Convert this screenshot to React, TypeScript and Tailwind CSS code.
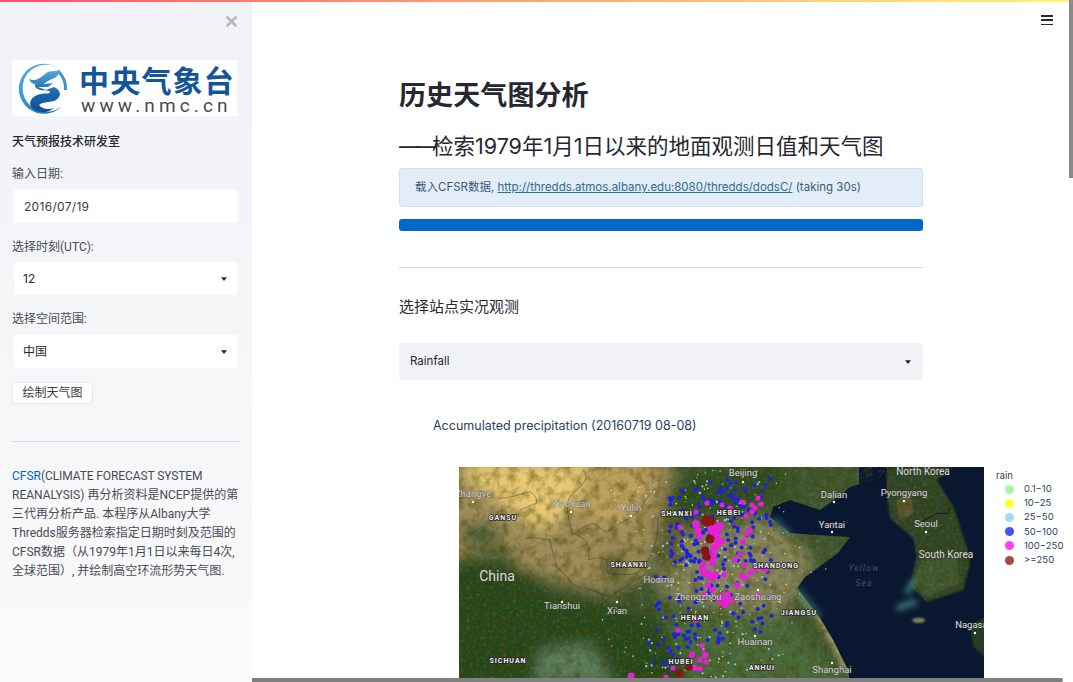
import React from "react";

const FONT = "font-['Inter','Noto_Sans_CJK_SC',sans-serif]";

function rng(seed: number) {
  let s = seed;
  return () => {
    s = (s * 16807) % 2147483647;
    return (s - 1) / 2147483646;
  };
}

type Dot = [number, number, number, string];

function makeDots(): Dot[] {
  const r = rng(9127);
  const out: Dot[] = [];
  const add = (n: number, x0: number, x1: number, y0: number, y1: number, rad: number, col: string, flat = false) => {
    for (let i = 0; i < n; i++) {
      const u = flat ? r() : (r() + r()) / 2;
      const v = r();
      out.push([x0 + u * (x1 - x0), y0 + v * (y1 - y0), rad, col]);
    }
  };
  add(130, 590, 840, 470, 682, 0.7, "#9fe09a");
  add(80, 600, 810, 480, 682, 0.8, "#f0ea3c");
  add(95, 630, 790, 480, 682, 1.1, "#8fcbe6");
  add(135, 668, 772, 478, 565, 2, "#1c22e0", true);
  add(85, 655, 772, 555, 640, 2, "#1c22e0", true);
  add(22, 640, 720, 630, 682, 2, "#1c22e0", true);
  const band: [number, number, number][] = [
    [696, 524, 4], [698, 531, 3.5], [700, 537, 3], [713, 529, 5.5], [715, 532, 6], [720, 526, 4], [716, 540, 3.5],
    [714, 548, 4], [713, 556, 4], [712, 563, 3.5], [718, 545, 3], [722, 541, 3], [703, 565, 3.5], [704, 572, 4],
    [708, 574, 4], [712, 578, 3.5], [715, 575, 3.5], [708, 585, 3], [712, 590, 3], [705, 595, 3], [724, 575, 3],
    [737, 585, 3], [742, 576, 3], [745, 578, 3], [728, 594, 3], [726, 600, 2.8], [722, 596, 3], [731, 600, 3],
    [725, 604, 4], [720, 601, 3], [746, 534, 2.8], [750, 530, 2.8], [743, 542, 2.8], [740, 554, 2.8], [752, 505, 2.6],
    [758, 498, 2.6], [761, 504, 2.6], [755, 508, 2.6], [752, 512, 2.6], [742, 502, 2.6], [746, 516, 2.6], [735, 512, 2.6],
    [730, 508, 2.6], [722, 505, 2.6], [707, 503, 2.6], [696, 512, 2.6], [680, 527, 2.6], [678, 630, 2.6],
    [696, 620, 2.8], [702, 646, 2.8], [705, 655, 3.2], [692, 655, 3.2], [700, 660, 2.8], [706, 662, 2.8],
    [695, 668, 2.8], [700, 669, 2.8], [673, 668, 2.6], [631, 676, 3.5], [666, 677, 2.6], [750, 573, 2.8],
    [755, 570, 2.6], [762, 568, 2.8], [758, 596, 2.8], [766, 570, 2.6], [735, 560, 2.8], [745, 565, 2.8],
  ];
  band.forEach(([x, y, rad]) => out.push([x, y, rad, "#e81fd8"]));
  ([
    [707, 521, 5.5], [711, 521, 4.5], [710, 539, 4.5], [705, 551, 4.5], [707, 557, 3.8], [679, 673, 3.8], [689, 667, 3.8],
  ] as [number, number, number][]).forEach(([x, y, rad]) => out.push([x, y, rad, "#8a1313"]));
  return out;
}

const DOTS = makeDots();

const City = ({ x, y, name, dy = -7, size = 9.5 }: { x: number; y: number; name: string; dy?: number; size?: number }) => (
  <g>
    <circle cx={x} cy={y} r={1.2} fill="#fff" />
    <text
      x={x}
      y={y + dy}
      textAnchor="middle"
      fontSize={size}
      fill="#d8d8d8"
      stroke="#3a3a3a"
      strokeWidth={0.5}
      paintOrder="stroke"
    >
      {name}
    </text>
  </g>
);

const Label2 = ({ x, y, name, size = 10 }: { x: number; y: number; name: string; size?: number }) => (
  <text x={x} y={y} textAnchor="middle" fontSize={size} fill="#dcdcdc" stroke="#333" strokeWidth="0.5" paintOrder="stroke">
    {name}
  </text>
);

const Prov = ({ x, y, name }: { x: number; y: number; name: string }) => (
  <text
    x={x}
    y={y}
    textAnchor="middle"
    fontSize={7}
    fontWeight={700}
    letterSpacing={1}
    fill="#efefef"
    stroke="#2a2a2a"
    strokeWidth={1.6}
    paintOrder="stroke"
  >
    {name}
  </text>
);

function MapImage() {
  return (
    <svg viewBox="459 467 525 215" className="w-[525px] h-[215px] block shrink-0" fontFamily="Roboto, sans-serif">
      <defs>
        <filter id="soft" x="-20%" y="-20%" width="140%" height="140%">
          <feGaussianBlur stdDeviation="20" />
        </filter>
        <filter id="soft2" x="-10%" y="-10%" width="120%" height="120%">
          <feGaussianBlur stdDeviation="3" />
        </filter>
        <filter id="soft3" x="-30%" y="-30%" width="160%" height="160%">
          <feGaussianBlur stdDeviation="9" />
        </filter>
        <filter id="grain">
          <feTurbulence type="fractalNoise" baseFrequency="0.11" numOctaves="5" seed="4" />
          <feColorMatrix values="0 0 0 0 0.05  0 0 0 0 0.05  0 0 0 0 0  2.2 0 0 0 -0.9" />
        </filter>
        <filter id="speck">
          <feTurbulence type="fractalNoise" baseFrequency="0.3" numOctaves="3" seed="11" />
          <feColorMatrix values="0 0 0 0 0.85  0 0 0 0 0.8  0 0 0 0 0.55  0 2.4 0 0 -1.2" />
        </filter>
        <clipPath id="landClip">
          <polygon points="459,467 888,467 880,478 850,487 830,503 820,510 790,500 773,507 770,517 790,533 817,535 850,537 838,553 805,577 797,588 820,618 833,640 848,670 850,682 459,682" />
        </clipPath>
        <clipPath id="grainClip">
          <polygon points="459,467 888,467 880,478 850,487 830,503 820,510 790,500 773,507 770,517 790,533 817,535 850,537 838,553 805,577 797,588 820,618 833,640 848,670 850,682 459,682" />
          <polygon points="887,467 953,467 937,480 953,507 967,547 970,563 963,590 927,602 910,585 917,557 913,538 890,518 887,493" />
        </clipPath>
      </defs>
      <rect x="459" y="467" width="525" height="215" fill="#0a1730" />
      <g clipPath="url(#landClip)">
        <rect x="459" y="467" width="400" height="215" fill="#3f5631" />
        <g transform="translate(450 460) scale(0.3333)" filter="url(#soft)">
          <polygon points="0,0 680,0 650,130 620,240 590,350 480,400 330,370 210,320 170,270 0,290" fill="#9e8a58" />
          <polygon points="40,0 420,0 390,110 290,215 210,170 130,110 60,70" fill="#e8c873" />
          <polygon points="420,0 610,0 590,120 500,200 390,170" fill="#bd9f5e" />
          <polygon points="0,300 200,320 330,410 500,440 640,480 720,680 0,680" fill="#25461f" />
          <polygon points="270,570 420,550 500,680 250,680" fill="#5a7a5c" />
          <polygon points="20,200 120,190 170,260 60,260" fill="#3e5a30" />
          <polygon points="640,100 770,30 1000,0 1000,110 760,160 680,170" fill="#2f4c24" />
          <polygon points="680,220 960,170 1100,300 1000,470 640,420 610,340" fill="#85835a" />
          <polygon points="640,470 1000,460 1200,680 720,680" fill="#4a6a3a" />
          <polygon points="620,170 690,170 700,320 630,340" fill="#5c5a32" />
          <polygon points="460,290 530,280 520,370 470,370" fill="#3f5a2c" />
        </g>
        <path d="M797 588 L820 618 L833 640 L848 670" stroke="#cdb57c" strokeWidth="6" fill="none" filter="url(#soft2)" />
      </g>
      <g transform="translate(740 460) scale(0.3333)">
        <g filter="url(#soft2)">
          <polygon points="440,20 640,20 590,60 640,140 680,260 690,310 670,390 560,425 510,375 530,290 520,235 450,175 440,100" fill="#2f4528" />
          <polygon points="470,120 510,105 520,160 480,180" fill="#5d5832" />
          <polygon points="540,300 650,290 660,370 560,410 520,370" fill="#3f5830" />
          <polygon points="690,500 735,470 735,590 700,560" fill="#243e22" />
          <ellipse cx="536" cy="481" rx="19" ry="8" fill="#7c8a58" />
        </g>
        <path d="M500 400 L525 360 M530 425 L470 445" stroke="#3f8582" strokeWidth="16" fill="none" filter="url(#soft3)" />
        <path d="M170 385 L240 470 M150 225 L100 175" stroke="#2e6f70" strokeWidth="14" fill="none" filter="url(#soft3)" />
      </g>
      <g clipPath="url(#grainClip)">
        <rect x="459" y="467" width="525" height="215" filter="url(#grain)" opacity="0.5" />
        <rect x="459" y="467" width="525" height="215" filter="url(#speck)" opacity="0.14" />
      </g>
      <g transform="translate(450 460) scale(0.3333)" fill="none" stroke="#2a2c20" strokeWidth="2" opacity="0.6">
        <path d="M400 30 C420 60 400 70 360 110 C345 130 355 190 370 225 C395 205 410 195 430 190 C450 200 460 215 470 215 C510 190 540 175 560 160 C580 130 590 115 615 85" />
        <path d="M380 225 C420 240 420 270 415 300 C440 290 460 295 470 300 C472 320 470 335 475 340 C510 345 540 345 560 340 C580 320 590 310 600 290 C612 260 618 245 620 230 C625 200 622 190 625 170" />
        <path d="M145 115 C180 115 215 100 240 95 C255 105 262 115 260 130 C240 135 225 145 210 150" />
        <path d="M320 320 C350 345 365 375 380 380 C420 385 450 400 480 410 C520 385 560 360 590 340" />
        <path d="M230 235 C260 230 285 240 300 240 C305 270 315 300 320 320" />
      </g>
      <g transform="translate(740 460) scale(0.3333)" fill="none" stroke="#111" strokeWidth="2.5">
        <path d="M415 68 L440 30 L455 22" />
        <path d="M545 185 L590 160 L625 160 L628 145" />
      </g>
      <text x="864" y="571" fontSize="8.5" letterSpacing="1.2" fontStyle="italic" fill="#42507a" textAnchor="middle">
        Yellow
      </text>
      <text x="864" y="586" fontSize="8.5" letterSpacing="1.2" fontStyle="italic" fill="#42507a" textAnchor="middle">
        Sea
      </text>
      <g>
        {DOTS.map(([x, y, r, c], i) => (
          <circle key={i} cx={x} cy={y} r={r} fill={c} />
        ))}
      </g>
      <City x={473} y={502} name="Zhangye" dy={-5} />
      <City x={571} y={512} name="Yinchuan" dy={-5} />
      <City x={631} y={516} name="Yulin" dy={-5} />
      <City x={562} y={602} name="Tianshui" dy={7} />
      <City x={617} y={602} name="Xi'an" dy={12} />
      <Label2 x={659} y={583} name="Houma" size={9.5} />
      <Label2 x={698} y={600} name="Zhengzhou" size={9.5} />
      <City x={743} y={482} name="Beijing" dy={-6} />
      <City x={834} y={502} name="Dalian" dy={-4} />
      <City x={832} y={532} name="Yantai" dy={-4} />
      <City x={904} y={501} name="Pyongyang" dy={-5} />
      <City x={926} y={532} name="Seoul" dy={-5} />
      <City x={758} y={590} name="Zaoshuang" dy={10} />
      <City x={755} y={636} name="Huainan" dy={9} />
      <City x={832} y={663} name="Shanghai" dy={10} />
      <City x={975} y={633} name="Nagasaki" dy={-5} />
      <Label2 x={923} y={475} name="North Korea" />
      <Label2 x={946} y={558} name="South Korea" />
      <Label2 x={497} y={581} name="China" size={14} />
      <Prov x={503} y={520} name="GANSU" />
      <Prov x={629} y={567} name="SHAANXI" />
      <Prov x={677} y={516} name="SHANXI" />
      <Prov x={729} y={515} name="HEBEI" />
      <Prov x={695} y={620} name="HENAN" />
      <Prov x={508} y={663} name="SICHUAN" />
      <Prov x={681} y={664} name="HUBEI" />
      <Prov x={776} y={568} name="SHANDONG" />
      <Prov x={799} y={615} name="JIANGSU" />
      <Prov x={762} y={670} name="ANHUI" />
    </svg>
  );
}

const Caret = () => (
  <svg viewBox="0 0 8 5" className="w-[6px] h-[4px] shrink-0">
    <path d="M0 0 H8 L4 5 Z" fill="#262730" />
  </svg>
);

const Select = ({ value }: { value: string }) => (
  <div className="mx-[2px] h-[33px] bg-white rounded-[2px] flex items-center justify-between pl-[9px] pr-[11px] text-[12px] text-[#262730]">
    <span>{value}</span>
    <Caret />
  </div>
);

const Label = ({ children }: { children: React.ReactNode }) => (
  <div className="font-['Roboto','Noto_Sans_CJK_SC',sans-serif] text-[12px] leading-[16px] text-[#4a4b55]">{children}</div>
);

function Logo() {
  return (
    <div className="h-[56px] w-[225px] bg-white flex items-center">
      <svg viewBox="0 0 56 56" className="w-[56px] h-[56px] ml-[3px] shrink-0">
        <defs>
          <linearGradient id="ring" x1="0" y1="0" x2="1" y2="1">
            <stop offset="0" stopColor="#52b4e6" />
            <stop offset="1" stopColor="#1a66ad" />
          </linearGradient>
          <linearGradient id="drag" x1="0" y1="0" x2="0" y2="1">
            <stop offset="0" stopColor="#5aa9da" />
            <stop offset="0.55" stopColor="#1a66ad" />
            <stop offset="1" stopColor="#0f4f98" />
          </linearGradient>
        </defs>
        <path d="M41 7 A25 25 0 1 0 47 46 A23 23 0 0 1 27 51 A23 23 0 0 1 8 24 A23 23 0 0 1 41 7 Z" fill="url(#ring)" />
        <path d="M44 10 A25 25 0 0 1 52 30 L49 30 A23 23 0 0 0 42 12 Z" fill="#3a94cf" />
        <path d="M14 19 C21 22 25 18 31 13 C36 10 40 12 45 10 C44 15 41 18 37 19 C34 20 31 22 29 24 L38 23 L33 27 L23 27 L31 30 L39 27 C46 30 47 36 41 40 C36 43 28 41 24 45 C27 49 33 50 39 48 C32 54 22 53 17 48 C12 41 19 35 26 34 C31 33 35 34 35 32 C35 30 30 31 25 30 C22 29 19 27 20 24 C18 24 15 22 14 19 Z" fill="url(#drag)" />
      </svg>
      <div className="ml-[7px] flex flex-col items-start gap-[2px] font-['Noto_Sans_CJK_SC',sans-serif]">
        <div className="ml-[1px] mt-[2px] text-[30px] leading-[30px] font-bold text-[#14559a] tracking-[1.2px] whitespace-nowrap">中央气象台</div>
        <div className="font-['Roboto',sans-serif] text-[19px] leading-[19px] text-[#4a4a4a] tracking-[4.15px] ml-[3px] whitespace-nowrap">www.nmc.cn</div>
      </div>
    </div>
  );
}

const Legend = () => {
  const items: [string, string][] = [
    ["#a9f5a9", "0.1−10"],
    ["#ffff33", "10−25"],
    ["#a8d8f8", "25−50"],
    ["#4d4dff", "50−100"],
    ["#ff40f0", "100−250"],
    ["#a84848", ">=250"],
  ];
  return (
    <div className="ml-[12px] pt-[3px] text-[9.5px] text-[#2a3f5f] shrink-0 w-[80px]">
      <div className="h-[12px] leading-[12px]">rain</div>
      <div>
        {items.map(([c, t]) => (
          <div key={t} className="flex items-center h-[14.2px]">
            <span className="w-[9px] h-[9px] rounded-full ml-[9px] mr-[10px] shrink-0" style={{ background: c }} />
            <span>{t}</span>
          </div>
        ))}
      </div>
    </div>
  );
};

export default function App() {
  return (
    <div className={`relative flex w-[1073px] h-[682px] overflow-hidden bg-white ${FONT}`}>
      <div className="absolute left-0 right-0 top-0 h-[2px] z-10 bg-gradient-to-r from-[#ff4b6b] to-[#fff27a]" />

      <aside className="relative w-[252px] h-full shrink-0 bg-gradient-to-b from-[#f0f2f6] to-[#fafafa] px-3 pt-[60px]">
        <svg viewBox="0 0 12 12" className="absolute top-[15px] left-[225px] w-[13px] h-[13px]">
          <path d="M1.5 1.5 L10.5 10.5 M10.5 1.5 L1.5 10.5" stroke="#b7b9bd" strokeWidth="2.6" />
        </svg>
        <Logo />
        <div className="mt-[18px] text-[12px] leading-[16px] font-medium text-[#262730]">天气预报技术研发室</div>
        <div className="mt-[16px]"><Label>输入日期:</Label></div>
        <div className="mt-[8px] mx-[2px] h-[33px] bg-white flex items-center pl-[10px] text-[12px] text-[#3a3b44] tracking-[0.3px]">2016/07/19</div>
        <div className="mt-[16px]"><Label>选择时刻(UTC):</Label></div>
        <div className="mt-[7px]"><Select value="12" /></div>
        <div className="mt-[16px]"><Label>选择空间范围:</Label></div>
        <div className="mt-[8px]"><Select value="中国" /></div>
        <button className="mt-[14px] h-[22px] w-[81px] bg-white border border-[#e6e9ef] rounded-[3px] text-[12px] text-[#3a3b44] flex items-center justify-center">
          绘制天气图
        </button>
        <hr className="mt-[37px] border-0 border-t border-[#d9dbe0]" />
        <p className="mt-[25px] font-['Roboto','Noto_Sans_CJK_SC',sans-serif] text-[12px] leading-[19px] text-[#4a4b55] whitespace-nowrap">
          <span className="text-[#0068c9]">CFSR</span>
          <span className="tracking-[-0.1px]">(CLIMATE FORECAST SYSTEM</span>
          <br />
          REANALYSIS) 再分析资料是NCEP提供的第
          <br />
          三代再分析产品. 本程序从Albany大学
          <br />
          Thredds服务器检索指定日期时刻及范围的
          <br />
          CFSR数据（从1979年1月1日以来每日4次,
          <br />
          全球范围）, 并绘制高空环流形势天气图.
        </p>
      </aside>

      <main className="relative flex-1 min-w-0 h-full overflow-hidden">
        <button className="absolute top-[14px] right-[20px] w-[12px] h-[12px] flex flex-col justify-between py-[1px]">
          <span className="block h-[1.5px] w-full bg-[#262730]" />
          <span className="block h-[1.5px] w-full bg-[#262730]" />
          <span className="block h-[1.5px] w-full bg-[#262730]" />
        </button>
        <div className="ml-[147px] w-[524px] pt-[77px] text-[#262730]">
          <h1 className="text-[27px] leading-[38px] font-bold tracking-[0.1px]">历史天气图分析</h1>
          <h2 className="mt-[15px] text-[21.5px] leading-[32px] font-normal whitespace-nowrap">
            <span className="tracking-[-5px]">——</span>检索1979年1月1日以来的地面观测日值和天气图
          </h2>
          <div className="mt-[6px] h-[39px] bg-[#e3edf8] border border-[#cfe0f3] rounded-[3px] flex items-center pl-[15px] text-[11.5px] text-[#3b5a76] whitespace-nowrap">
            载入CFSR数据,&nbsp;<span className="underline text-[#2b6c8f]">http://thredds.atmos.albany.edu:8080/thredds/dodsC/</span>&nbsp;(taking 30s)
          </div>
          <div className="mt-[12px] h-[12px] rounded-[3px] bg-[#0068c9]" />
          <hr className="mt-[36px] border-0 border-t border-[#d9d9dc]" />
          <div className="mt-[30px] text-[15px] leading-[18px]">选择站点实况观测</div>
          <div className="mt-[27px] h-[37px] bg-[#f0f2f6] rounded-[3px] flex items-center justify-between pl-[11px] pr-[12px] pt-[1px] text-[11.5px]">
            <span>Rainfall</span>
            <Caret />
          </div>
          <div className="mt-[37px] ml-[34px] text-[12.5px] leading-[18px] text-[#2a3f5f] whitespace-nowrap">Accumulated precipitation (20160719 08-08)</div>
          <div className="mt-[32px] ml-[60px] flex w-[700px]">
            <MapImage />
            <Legend />
          </div>
        </div>
      </main>

      <div className="absolute right-0 top-0 w-[4px] h-[178px] bg-[#8a8a8a] z-20" />
      <div className="absolute left-[252px] bottom-0 w-[811px] h-[4px] bg-[#808080] rounded-r-[2px] z-20" />
    </div>
  );
}
